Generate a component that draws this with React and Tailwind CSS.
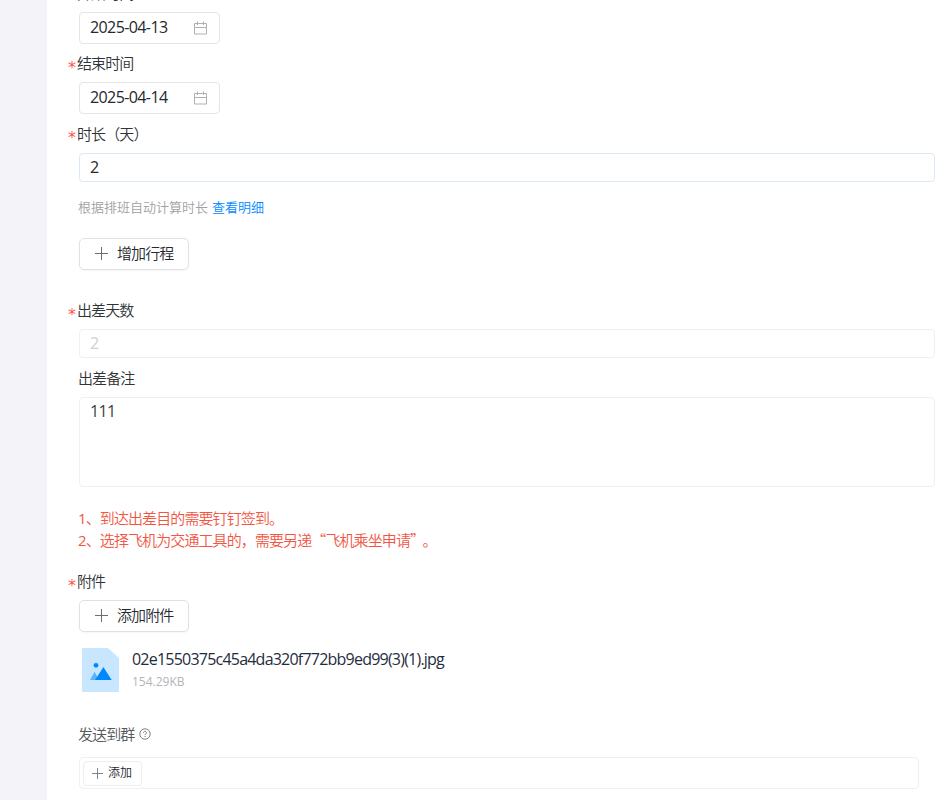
import React, { useState } from "react";
import clsx from "clsx";

const CalendarIcon = () => (
  <svg className="w-[14px] h-[14px] shrink-0" viewBox="0 0 14 14" fill="none" stroke="#b0b0b0">
    <path d="M0.5 2.5h12v10.5h-12zM0.5 6.5h12M3.5 0.5v3.5M9.5 0.5v3.5" />
  </svg>
);

const PlusIcon = ({ className }) => (
  <svg className={clsx("shrink-0", className)} viewBox="0 0 13 13" fill="none" stroke="#6b6e72">
    <path d="M6.5 0v13M0 6.5h13" />
  </svg>
);

const ImageFileIcon = () => (
  <svg className="w-[37px] h-[44px] shrink-0" viewBox="0 0 37 44">
    <path d="M1 0h25l11 10v33a1 1 0 0 1-1 1H1a1 1 0 0 1-1-1V1a1 1 0 0 1 1-1z" fill="#c9e6ff" />
    <circle cx="14" cy="17.3" r="2.4" fill="#0089ff" />
    <path d="M8 32l4.6-8.2L17 32z" fill="#5cb3ff" />
    <path d="M13 32l8.4-13L29.7 32z" fill="#0089ff" />
  </svg>
);

const HelpIcon = () => (
  <svg className="w-[12px] h-[12px] shrink-0" viewBox="0 0 12 12" fill="none" stroke="#6f7276" strokeWidth="0.9">
    <circle cx="6" cy="6" r="5.2" />
    <path d="M4.5 4.9c0-2 3-2 3-.1 0 1.1-1.5 1-1.5 2.3M6 8v1" />
  </svg>
);

const Label = ({ required, className, children }) => (
  <div className={clsx("flex items-center -ml-[11px] text-[15px] tracking-[-0.9px] text-[#303338]", className)}>
    <span className="w-[9px] shrink-0 pt-[9px] font-['DejaVu_Sans',sans-serif] font-normal text-[16px] leading-none tracking-normal text-[#ff5552]">
      {required && "*"}
    </span>
    <span className={clsx(!required && "pl-px")}>{children}</span>
  </div>
);

const DateField = ({ value }) => (
  <div className="flex items-center justify-between w-[141px] h-[32px] pl-[10px] pr-[11px] border border-[#e4e5e7] rounded-[4px]">
    <span className="pb-[2px] font-normal text-[16px] tracking-[-0.6px] text-[#25282c]">{value}</span>
    <CalendarIcon />
  </div>
);

const AddButton = ({ children }) => (
  <button className="flex items-center w-[110px] h-[32px] pl-[15px] pb-[2px] border border-[#e0e1e3] rounded-[5px] shadow-[0_1px_2px_rgba(0,0,0,0.04)] text-[15px] tracking-[-0.9px] text-[#25282c]">
    <PlusIcon className="w-[13px] h-[13px] mr-[9px]" />
    {children}
  </button>
);

const App = () => {
  const [duration, setDuration] = useState("2");
  const [remark, setRemark] = useState("111");

  return (
    <div className="flex h-screen overflow-hidden bg-[#f4f3fa] font-['Open_Sans','Noto_Sans_CJK_SC',sans-serif] font-[350] leading-[22px]">
      <div className="w-[47px] shrink-0" />

      <div className="flex-1 h-[840px] -mt-[26px] pl-[32px] pr-[5px] bg-white">
        {/* Trip dates */}
        <Label required className="h-[38px]">开始时间</Label>
        <DateField value="2025-04-13" />
        <Label required className="h-[38px]">结束时间</Label>
        <DateField value="2025-04-14" />

        <Label required className="h-[39px]">时长（天）</Label>
        <input
          value={duration}
          onChange={(e) => setDuration(e.target.value)}
          className="block w-full h-[29px] px-[10px] pb-[2px] border border-[#dbe9f6] rounded-[4px] font-normal text-[16px] text-[#25282c] outline-none"
        />
        <div className="flex items-center h-[56px] pb-[6px] -ml-px text-[13px] tracking-normal text-[#a0a1a3]">
          根据排班自动计算时长
          <a className="ml-[4px] text-[#0089ff]">查看明细</a>
        </div>
        <AddButton>增加行程</AddButton>

        {/* Totals and remark */}
        <Label required className="h-[38px] mt-[21px]">出差天数</Label>
        <input
          value={duration}
          disabled
          className="block w-full h-[29px] px-[10px] pb-[2px] border border-[#f0f0f1] rounded-[4px] font-normal text-[16px] text-[#cfd0d2]"
        />
        <Label className="h-[39px]">出差备注</Label>
        <textarea
          value={remark}
          onChange={(e) => setRemark(e.target.value)}
          className="block w-full h-[90px] px-[10px] py-[2px] border border-[#f0f0f1] rounded-[4px] resize-none font-normal text-[16px] tracking-[-0.7px] text-[#3b3e42] outline-none"
        />

        <div className="mt-[20px] -ml-px text-[15px] tracking-[-0.9px] text-[#f25643]">
          <p><span className="font-normal">1</span>、到达出差目的需要钉钉签到。</p>
          <p>
            <span className="font-normal">2</span>、选择飞机为交通工具的，需要另递
            <span className="mr-[6px] font-['Noto_Sans_CJK_SC',sans-serif]">“飞机乘坐申请”</span>。
          </p>
        </div>

        {/* Attachments */}
        <Label required className="h-[38px] mt-[11px]">附件</Label>
        <AddButton>添加附件</AddButton>
        <div className="flex mt-[16px] pl-[3px]">
          <ImageFileIcon />
          <div className="ml-[13px] font-normal">
            <p className="h-[24px] leading-[23px] text-[16px] tracking-[-0.78px] text-[#1f2d3d]">
              02e1550375c45a4da320f772bb9ed99(3)(1).jpg
            </p>
            <p className="h-[20px] leading-[20px] text-[12px] text-[#b3b5b8]">154.29KB</p>
          </div>
        </div>

        {/* Send to group */}
        <div className="flex items-center h-[46px] mt-[19px] -ml-px text-[15px] tracking-[-0.9px] text-[#55585c]">
          <span className="mr-[5px]">发送到群</span>
          <HelpIcon />
        </div>
        <div className="flex items-center w-[840px] h-[32px] pl-[3px] border border-[#f0f0f1] rounded-[4px]">
          <button className="flex items-center w-[59px] h-[25px] pl-[8px] border border-[#eeeeef] rounded-[4px] text-[12px] text-[#25282c]">
            <PlusIcon className="w-[11px] h-[11px] mr-[5px]" />
            添加
          </button>
        </div>
      </div>
    </div>
  );
};

export default App;
